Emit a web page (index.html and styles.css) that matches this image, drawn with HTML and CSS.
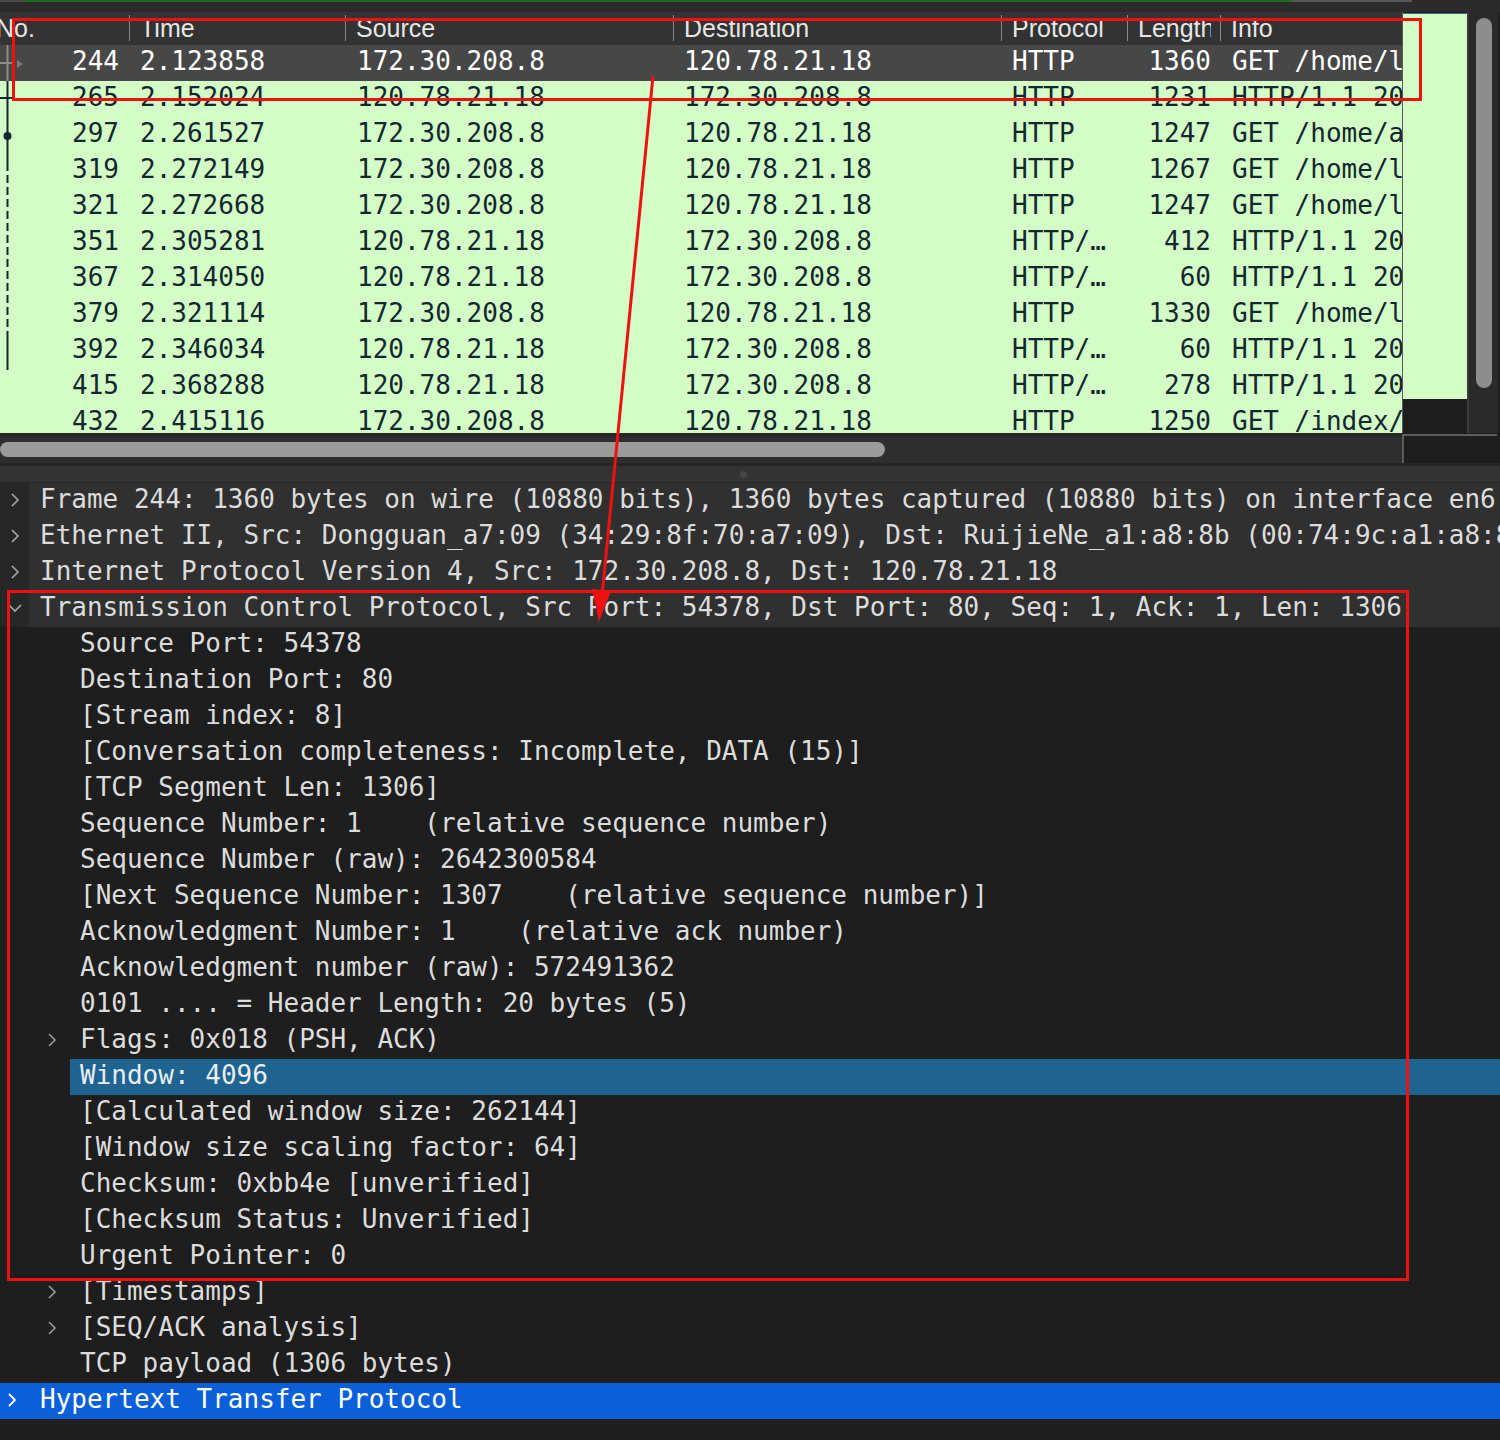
FILE: index.html
```html
<!DOCTYPE html>
<html>
<head>
<meta charset="utf-8">
<link rel="stylesheet" href="styles.css">
</head>
<body>
<div class="topbar">
  <div class="progress"><span class="pg-left"></span><span class="pg-green"></span><span class="pg-gray"></span></div>
</div>
<div class="plist">
  <div class="ptable">
    <div class="phead">
      <div class="hc hno"><span>No.</span></div>
      <div class="hc"><span>Time</span></div>
      <div class="hc"><span>Source</span></div>
      <div class="hc"><span>Destination</span></div>
      <div class="hc"><span>Protocol</span></div>
      <div class="hc"><span>Length</span></div>
      <div class="hc"><span>Info</span></div>
    </div>
    <div class="prows">
      <div class="prow sel"><span class="c no">244</span><span class="c">2.123858</span><span class="c src">172.30.208.8</span><span class="c">120.78.21.18</span><span class="c">HTTP</span><span class="c len">1360</span><span class="c info">GET /home/login HTTP/1.1</span></div>
      <div class="prow"><span class="c no">265</span><span class="c">2.152024</span><span class="c src">120.78.21.18</span><span class="c">172.30.208.8</span><span class="c">HTTP</span><span class="c len">1231</span><span class="c info">HTTP/1.1 200 OK</span></div>
      <div class="prow"><span class="c no">297</span><span class="c">2.261527</span><span class="c src">172.30.208.8</span><span class="c">120.78.21.18</span><span class="c">HTTP</span><span class="c len">1247</span><span class="c info">GET /home/a HTTP/1.1</span></div>
      <div class="prow"><span class="c no">319</span><span class="c">2.272149</span><span class="c src">172.30.208.8</span><span class="c">120.78.21.18</span><span class="c">HTTP</span><span class="c len">1267</span><span class="c info">GET /home/l HTTP/1.1</span></div>
      <div class="prow"><span class="c no">321</span><span class="c">2.272668</span><span class="c src">172.30.208.8</span><span class="c">120.78.21.18</span><span class="c">HTTP</span><span class="c len">1247</span><span class="c info">GET /home/l HTTP/1.1</span></div>
      <div class="prow"><span class="c no">351</span><span class="c">2.305281</span><span class="c src">120.78.21.18</span><span class="c">172.30.208.8</span><span class="c">HTTP/…</span><span class="c len">412</span><span class="c info">HTTP/1.1 200 OK</span></div>
      <div class="prow"><span class="c no">367</span><span class="c">2.314050</span><span class="c src">120.78.21.18</span><span class="c">172.30.208.8</span><span class="c">HTTP/…</span><span class="c len">60</span><span class="c info">HTTP/1.1 200 OK</span></div>
      <div class="prow"><span class="c no">379</span><span class="c">2.321114</span><span class="c src">172.30.208.8</span><span class="c">120.78.21.18</span><span class="c">HTTP</span><span class="c len">1330</span><span class="c info">GET /home/l HTTP/1.1</span></div>
      <div class="prow"><span class="c no">392</span><span class="c">2.346034</span><span class="c src">120.78.21.18</span><span class="c">172.30.208.8</span><span class="c">HTTP/…</span><span class="c len">60</span><span class="c info">HTTP/1.1 200 OK</span></div>
      <div class="prow"><span class="c no">415</span><span class="c">2.368288</span><span class="c src">120.78.21.18</span><span class="c">172.30.208.8</span><span class="c">HTTP/…</span><span class="c len">278</span><span class="c info">HTTP/1.1 200 OK</span></div>
      <div class="prow"><span class="c no">432</span><span class="c">2.415116</span><span class="c src">172.30.208.8</span><span class="c">120.78.21.18</span><span class="c">HTTP</span><span class="c len">1250</span><span class="c info">GET /index/ HTTP/1.1</span></div>
      <svg class="related" width="30" height="388" viewBox="0 0 30 388">
        <line x1="7.5" y1="0" x2="7.5" y2="36" stroke="#8c8c8c" stroke-width="2"/>
        <line x1="0" y1="18" x2="13" y2="18" stroke="#8c8c8c" stroke-width="2"/>
        <polygon points="17,15 23,19 17,23" fill="#7a7a7a"/>
        <line x1="7.5" y1="36" x2="7.5" y2="118" stroke="#12272e" stroke-width="2"/>
        <line x1="0" y1="53" x2="13" y2="53" stroke="#12272e" stroke-width="2"/>
        <circle cx="7.5" cy="91" r="4" fill="#12272e"/>
        <line x1="7.5" y1="118" x2="7.5" y2="288" stroke="#12272e" stroke-width="2" stroke-dasharray="8 4"/>
        <line x1="7.5" y1="288" x2="7.5" y2="325" stroke="#12272e" stroke-width="2"/>
      </svg>
    </div>
  </div>
  <div class="minimap"><div class="mm-green"></div></div>
  <div class="vscroll"><div class="vthumb"></div></div>
</div>
<div class="hscroll">
  <div class="htrack"><div class="hthumb"></div></div>
  <div class="hcorner"></div>
</div>
<div class="splitter"><span class="sdot"></span></div>
<div class="details">
  <div class="drow top"><span class="gut"><svg width="10" height="14" viewBox="0 0 10 14"><polyline points="2,1 8,7 2,13" fill="none" stroke="#a8a8a8" stroke-width="1.6"/></svg></span><span class="tt">Frame 244: 1360 bytes on wire (10880 bits), 1360 bytes captured (10880 bits) on interface en6, id 0</span></div>
  <div class="drow top"><span class="gut"><svg width="10" height="14" viewBox="0 0 10 14"><polyline points="2,1 8,7 2,13" fill="none" stroke="#a8a8a8" stroke-width="1.6"/></svg></span><span class="tt">Ethernet II, Src: Dongguan_a7:09 (34:29:8f:70:a7:09), Dst: RuijieNe_a1:a8:8b (00:74:9c:a1:a8:8b)</span></div>
  <div class="drow top"><span class="gut"><svg width="10" height="14" viewBox="0 0 10 14"><polyline points="2,1 8,7 2,13" fill="none" stroke="#a8a8a8" stroke-width="1.6"/></svg></span><span class="tt">Internet Protocol Version 4, Src: 172.30.208.8, Dst: 120.78.21.18</span></div>
  <div class="drow top"><span class="gut"><svg width="16" height="10" viewBox="0 0 16 10"><polyline points="2,2 8,8 14,2" fill="none" stroke="#a8a8a8" stroke-width="1.6"/></svg></span><span class="tt">Transmission Control Protocol, Src Port: 54378, Dst Port: 80, Seq: 1, Ack: 1, Len: 1306</span></div>
  <div class="drow"><span class="ind"></span><span class="ct">Source Port: 54378</span></div>
  <div class="drow"><span class="ind"></span><span class="ct">Destination Port: 80</span></div>
  <div class="drow"><span class="ind"></span><span class="ct">[Stream index: 8]</span></div>
  <div class="drow"><span class="ind"></span><span class="ct">[Conversation completeness: Incomplete, DATA (15)]</span></div>
  <div class="drow"><span class="ind"></span><span class="ct">[TCP Segment Len: 1306]</span></div>
  <div class="drow"><span class="ind"></span><span class="ct">Sequence Number: 1    (relative sequence number)</span></div>
  <div class="drow"><span class="ind"></span><span class="ct">Sequence Number (raw): 2642300584</span></div>
  <div class="drow"><span class="ind"></span><span class="ct">[Next Sequence Number: 1307    (relative sequence number)]</span></div>
  <div class="drow"><span class="ind"></span><span class="ct">Acknowledgment Number: 1    (relative ack number)</span></div>
  <div class="drow"><span class="ind"></span><span class="ct">Acknowledgment number (raw): 572491362</span></div>
  <div class="drow"><span class="ind"></span><span class="ct">0101 .... = Header Length: 20 bytes (5)</span></div>
  <div class="drow"><span class="ind"><svg width="10" height="14" viewBox="0 0 10 14"><polyline points="2,1 8,7 2,13" fill="none" stroke="#9a9a9a" stroke-width="1.6"/></svg></span><span class="ct">Flags: 0x018 (PSH, ACK)</span></div>
  <div class="drow"><span class="ind sel-ind"></span><span class="ct sel">Window: 4096</span></div>
  <div class="drow"><span class="ind"></span><span class="ct">[Calculated window size: 262144]</span></div>
  <div class="drow"><span class="ind"></span><span class="ct">[Window size scaling factor: 64]</span></div>
  <div class="drow"><span class="ind"></span><span class="ct">Checksum: 0xbb4e [unverified]</span></div>
  <div class="drow"><span class="ind"></span><span class="ct">[Checksum Status: Unverified]</span></div>
  <div class="drow"><span class="ind"></span><span class="ct">Urgent Pointer: 0</span></div>
  <div class="drow"><span class="ind"><svg width="10" height="14" viewBox="0 0 10 14"><polyline points="2,1 8,7 2,13" fill="none" stroke="#9a9a9a" stroke-width="1.6"/></svg></span><span class="ct">[Timestamps]</span></div>
  <div class="drow"><span class="ind"><svg width="10" height="14" viewBox="0 0 10 14"><polyline points="2,1 8,7 2,13" fill="none" stroke="#9a9a9a" stroke-width="1.6"/></svg></span><span class="ct">[SEQ/ACK analysis]</span></div>
  <div class="drow"><span class="ind"></span><span class="ct">TCP payload (1306 bytes)</span></div>
  <div class="drow http"><span class="gut"><svg width="10" height="14" viewBox="0 0 10 14"><polyline points="2,1 8,7 2,13" fill="none" stroke="#ffffff" stroke-width="1.8"/></svg></span><span class="tt">Hypertext Transfer Protocol</span></div>
</div>
<svg class="annot" width="1500" height="1440" viewBox="0 0 1500 1440">
  <rect x="13.5" y="19.5" width="1407" height="80" fill="none" stroke="#ef1010" stroke-width="3"/>
  <rect x="8.5" y="591.5" width="1399" height="688" fill="none" stroke="#ef1010" stroke-width="3"/>
  <line x1="653" y1="76" x2="602" y2="596" stroke="#ef1010" stroke-width="3"/>
  <polygon points="599,622 592,589 611,591" fill="#ef1010"/>
</svg>
</body>
</html>
```

FILE: styles.css
```css
html, body {
  margin: 0;
  padding: 0;
}
body {
  width: 1500px;
  height: 1440px;
  overflow: hidden;
  position: relative;
  background: #1e1e1e;
  font-family: "DejaVu Sans Mono", "Liberation Mono", monospace;
  font-size: 26px;
}

/* top strip */
.topbar {
  height: 12px;
  background: #2b2b2b;
  border-top: 0;
}
.progress {
  display: flex;
  height: 2px;
}
.pg-left { width: 26px; background: #4a4a4a; }
.pg-green { width: 1266px; background: #1d6b1d; }
.pg-gray { width: 120px; background: #585858; }

/* packet list */
.plist {
  display: flex;
  height: 421px;
}
.ptable {
  width: 1402px;
  flex: none;
  overflow: hidden;
  display: flex;
  flex-direction: column;
}
.phead {
  height: 33px;
  flex: none;
  background: #333333;
  display: grid;
  grid-template-columns: 129px 216px 328px 328px 126px 93px 182px;
  font-family: "Liberation Sans", Arial, sans-serif;
  font-size: 25px;
  line-height: 33px;
  color: #e6e6e6;
}
.hc {
  position: relative;
  padding: 0 9px 0 11px;
  overflow: hidden;
}
.hc span {
  display: block;
  overflow: hidden;
  white-space: nowrap;
}
.hc + .hc::before {
  content: "";
  position: absolute;
  left: 0;
  top: 3px;
  bottom: 4px;
  width: 1px;
  background: #8a8a8a;
}
.hc.hno {
  padding-left: 0;
}
.hc.hno span {
  margin-left: -4px;
}
.prows {
  flex: 1;
  position: relative;
  overflow: hidden;
  background: #d3fcc6;
}
.prow {
  display: grid;
  grid-template-columns: 129px 216px 328px 328px 126px 93px 182px;
  height: 36px;
  line-height: 32px;
  background: #d3fcc6;
  color: #12272e;
  white-space: pre;
}
.prow.sel {
  background: #474747;
  color: #ffffff;
}
.c {
  padding-left: 11px;
  overflow: hidden;
}
.c.src { padding-left: 12px; }
.c.no {
  text-align: right;
  padding-left: 0;
  padding-right: 10px;
}
.c.len {
  text-align: right;
  padding-left: 0;
  padding-right: 9px;
}
.c.info { padding-left: 12px; }
.related {
  position: absolute;
  left: 0;
  top: 0;
}

.minimap {
  width: 64px;
  flex: none;
  border-left: 1px solid #5a5a5a;
  background: #1e1e1e;
}
.mm-green {
  height: 385px;
  margin-top: 1px;
  border-top: 1px solid #3f6d8c;
  background: #d3fcc6;
}
.vscroll {
  width: 31px;
  flex: none;
  border-left: 2px solid #3b3b3b;
  background: #2a2a2a;
  padding-top: 6px;
  box-sizing: border-box;
}
.vthumb {
  width: 16px;
  height: 370px;
  margin-left: 7px;
  border-radius: 8px;
  background: #8d8d8d;
}

/* horizontal scrollbar */
.hscroll {
  display: flex;
  height: 30px;
}
.htrack {
  width: 1402px;
  flex: none;
  background: #2e2e2e;
  padding-top: 9px;
  box-sizing: border-box;
  border-top: 4px solid #272727;
}
.hthumb {
  width: 885px;
  height: 15px;
  margin-top: -4px;
  border-radius: 8px;
  background: #9b9b9b;
}
.hcorner {
  flex: 1;
  margin-top: 1px;
  border-top: 2px solid #5c5c5c;
  border-left: 2px solid #5c5c5c;
  background: #1e1e1e;
  margin-right: 3px;
}

/* splitter */
.splitter {
  height: 16px;
  border-top: 3px solid #262626;
  background: #333333;
  display: flex;
  justify-content: center;
  align-items: center;
}
.sdot {
  width: 7px;
  height: 7px;
  border-radius: 50%;
  background: #474747;
  margin-left: -14px;
}

/* details */
.details {
  border-top: 1px solid #262626;
}
.drow {
  display: flex;
  height: 36px;
  line-height: 32px;
  white-space: pre;
  overflow: hidden;
  color: #dcdcdc;
  background: #1e1e1e;
}
.drow.top {
  background: #303030;
}
.gut {
  width: 29px;
  flex: none;
  display: flex;
  align-items: center;
  justify-content: center;
  padding-bottom: 2px;
  box-sizing: border-box;
}
.drow.top .gut {
  background: #272727;
}
.tt {
  padding-left: 11px;
}
.ind {
  width: 80px;
  flex: none;
  display: flex;
  align-items: center;
  padding-left: 47px;
  padding-bottom: 2px;
  box-sizing: border-box;
}
.ind.sel-ind {
  width: 70px;
}
.ct.sel {
  flex: 1;
  padding-left: 10px;
  background: #1f6391;
  color: #e8eef4;
}
.drow.http {
  background: #0b5fd8;
  color: #ffffff;
}
.drow.http .gut {
  justify-content: flex-start;
  padding-left: 7px;
}

/* annotation overlay */
.annot {
  position: absolute;
  left: 0;
  top: 0;
  pointer-events: none;
}
```
